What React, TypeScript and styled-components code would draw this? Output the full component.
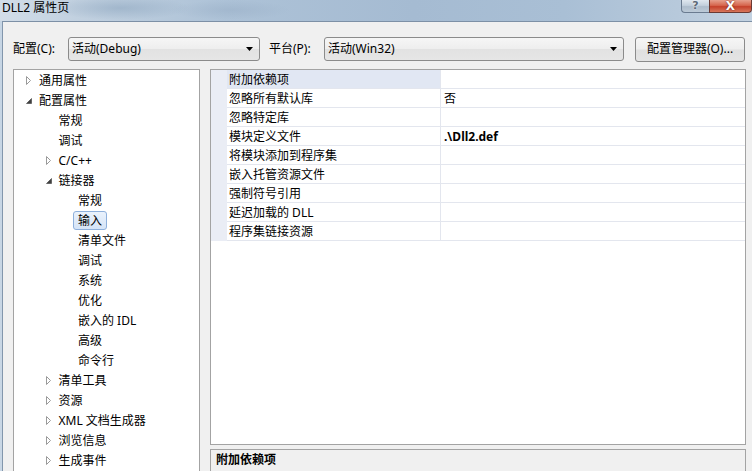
import React from "react";
import styled, { createGlobalStyle } from "styled-components";

const Global = createGlobalStyle`
  html, body { margin: 0; padding: 0; width: 752px; height: 471px; overflow: hidden; background: #f0f0f0; }
  body { font-family: "Noto Sans", "Noto Sans CJK SC", sans-serif; font-size: 12px; color: #000; }
  #root { width: 752px; height: 471px; }
  * { box-sizing: border-box; }
`;

const Window = styled.div`
  display: flex;
  flex-direction: column;
  width: 752px;
  height: 471px;
  overflow: hidden;
  background: linear-gradient(to bottom, #c6d5e4, #c9d7e5);
`;

const TitleBar = styled.div`
  flex: none;
  height: 21px;
  display: flex;
  align-items: flex-start;
  background:
    radial-gradient(ellipse 70px 12px at 120px 8px, rgba(140, 165, 190, 0.55), rgba(140, 165, 190, 0) 100%),
    radial-gradient(ellipse 60px 10px at 230px 10px, rgba(150, 172, 196, 0.45), rgba(150, 172, 196, 0) 100%),
    linear-gradient(to right, #d2dde8 0%, #c2d1e0 10%, #adc2d7 30%, #a5bbd2 55%, #a9bfd5 75%, #b7c9db 90%, #c3d2e1 100%);
`;

const Title = styled.span`
  padding: 0 0 0 2px;
  line-height: 15px;
  font-size: 12px;
  color: #000;
  white-space: nowrap;
`;

const CaptionButtons = styled.div`
  margin-left: auto;
  display: flex;
`;

const HelpButton = styled.div`
  width: 28px;
  height: 13px;
  border: 1px solid #6a7b90;
  border-top: none;
  border-right: none;
  border-radius: 0 0 0 4px;
  background: linear-gradient(to bottom, #dfe7ef 0%, #c3d0dd 45%, #aebdcc 55%, #bccad8 100%);
  display: flex;
  justify-content: center;
  align-items: flex-end;
  overflow: hidden;
  color: #5d6a78;
  font: bold 11px "DejaVu Sans", sans-serif;
  line-height: 12px;
  text-shadow: 0 0 2px #fff;
`;

const CloseButton = styled.div`
  width: 43px;
  height: 13px;
  border: 1px solid #6b3a33;
  border-top: none;
  border-radius: 0 0 4px 0;
  background: linear-gradient(to bottom, #e6a08d 0%, #d6664e 45%, #c5412b 55%, #d8775c 100%);
  display: flex;
  justify-content: center;
  align-items: flex-end;
  overflow: hidden;
  color: #fff;
  font: bold 12px "DejaVu Sans", sans-serif;
  line-height: 12px;
  text-shadow: 0 0 2px #5a1a10;
`;

const Client = styled.div`
  flex: 1;
  min-height: 0;
  overflow: hidden;
  margin-left: 2px;
  border-left: 1px solid #8296ac;
  border-top: 1px solid #7d90a6;
  background: #f0f0f0;
  padding: 15px 6px 0 10px;
  display: flex;
  flex-direction: column;
`;

const Toolbar = styled.div`
  flex: none;
  height: 24px;
  display: flex;
  align-items: center;
`;

const FieldLabel = styled.span<{ $gap?: number }>`
  flex: none;
  width: 55px;
  margin-left: ${(p) => p.$gap ?? 0}px;
  line-height: 24px;
  white-space: nowrap;
`;

const Combo = styled.div<{ $w: number }>`
  flex: none;
  width: ${(p) => p.$w}px;
  height: 24px;
  border: 1px solid #8b8b8b;
  border-radius: 3px;
  background: linear-gradient(to bottom, #f6f6f6 0%, #eeeeee 48%, #e2e2e2 52%, #e6e6e6 100%);
  display: flex;
  align-items: center;
  justify-content: space-between;
  padding: 0 6px 0 3px;
  white-space: nowrap;
  line-height: 20px;
`;

const Button = styled.div`
  flex: none;
  width: 110px;
  height: 25px;
  margin-left: 11px;
  border: 1px solid #8b8b8b;
  border-radius: 3px;
  background: linear-gradient(to bottom, #f6f6f6 0%, #eeeeee 48%, #e0e0e0 52%, #e4e4e4 100%);
  display: flex;
  align-items: center;
  justify-content: center;
  white-space: nowrap;
  line-height: 20px;
`;

const Main = styled.div`
  flex: none;
  height: 430px;
  margin-top: 8px;
  display: flex;
  gap: 10px;
`;

const TreePanel = styled.div`
  flex: none;
  width: 187px;
  border: 1px solid #a3a3a3;
  background: #fff;
  display: flex;
  flex-direction: column;
`;

const TreeRow = styled.div<{ $level: number }>`
  height: 20px;
  flex: none;
  display: flex;
  align-items: center;
  padding-left: ${(p) => p.$level * 19.5 + 4}px;
`;

const Expander = styled.span`
  flex: none;
  width: 16px;
  height: 20px;
  padding-left: 8px;
  display: flex;
  align-items: center;
`;

const TreeLabel = styled.span<{ $selected?: boolean }>`
  height: 19px;
  margin-top: 1px;
  line-height: 17px;
  padding: 0 4px;
  white-space: nowrap;
  border: 1px solid ${(p) => (p.$selected ? "#8eb0dc" : "transparent")};
  border-radius: 3px;
  background: ${(p) =>
    p.$selected ? "linear-gradient(to bottom, #eaf2fc, #d5e4f7)" : "transparent"};
`;

const RightPanel = styled.div`
  flex: none;
  width: 536px;
  display: flex;
  flex-direction: column;
`;

const Grid = styled.div`
  flex: none;
  height: 376px;
  border: 1px solid #a3a3a3;
  background: #fff;
  display: flex;
  flex-direction: column;
`;

const PropRow = styled.div`
  flex: none;
  height: 19px;
  display: grid;
  grid-template-columns: 16px 214px 1fr;
`;

const Strip = styled.div`
  background: #eaedf5;
`;

const NameCell = styled.div<{ $selected?: boolean }>`
  border-right: 1px solid #e3e6ee;
  border-bottom: 1px solid #e3e6ee;
  padding: 1px 0 0 2px;
  line-height: 17px;
  white-space: nowrap;
  background: ${(p) => (p.$selected ? "#e1e7f3" : "#fff")};
`;

const ValueCell = styled.div<{ $bold?: boolean }>`
  border-bottom: 1px solid #e3e6ee;
  padding: 1px 0 0 3px;
  line-height: 17px;
  white-space: nowrap;
  font-weight: ${(p) => (p.$bold ? 700 : 400)};
`;

const Splitter = styled.div`
  flex: none;
  height: 4px;
`;

const Description = styled.div`
  flex: none;
  height: 60px;
  border: 1px solid #a3a3a3;
  border-bottom: none;
  background: #f0f0f0;
  padding: 1px 0 0 5px;
`;

const DescTitle = styled.div`
  font-weight: 700;
  line-height: 18px;
`;

const Collapsed = () => (
  <svg width="6" height="9" viewBox="0 0 6 9">
    <path d="M0.5 0.5 L4.5 4.5 L0.5 8.5 Z" fill="#fff" stroke="#9a9a9a" strokeWidth="1" />
  </svg>
);

const Expanded = () => (
  <svg width="6" height="9" viewBox="0 0 6 9">
    <path d="M5.5 2.5 L5.5 7.5 L0.5 7.5 Z" fill="#404040" stroke="#404040" strokeWidth="0.6" />
  </svg>
);

const DropArrow = () => (
  <svg width="7" height="4" viewBox="0 0 7 4">
    <path d="M0 0 H7 L3.5 4 Z" fill="#000" />
  </svg>
);

type Node = { label: string; level: number; state?: "open" | "closed"; selected?: boolean };

const tree: Node[] = [
  { label: "通用属性", level: 0, state: "closed" },
  { label: "配置属性", level: 0, state: "open" },
  { label: "常规", level: 1 },
  { label: "调试", level: 1 },
  { label: "C/C++", level: 1, state: "closed" },
  { label: "链接器", level: 1, state: "open" },
  { label: "常规", level: 2 },
  { label: "输入", level: 2, selected: true },
  { label: "清单文件", level: 2 },
  { label: "调试", level: 2 },
  { label: "系统", level: 2 },
  { label: "优化", level: 2 },
  { label: "嵌入的 IDL", level: 2 },
  { label: "高级", level: 2 },
  { label: "命令行", level: 2 },
  { label: "清单工具", level: 1, state: "closed" },
  { label: "资源", level: 1, state: "closed" },
  { label: "XML 文档生成器", level: 1, state: "closed" },
  { label: "浏览信息", level: 1, state: "closed" },
  { label: "生成事件", level: 1, state: "closed" },
];

const props: { name: string; value?: string; bold?: boolean; selected?: boolean }[] = [
  { name: "附加依赖项", selected: true },
  { name: "忽略所有默认库", value: "否" },
  { name: "忽略特定库" },
  { name: "模块定义文件", value: ".\\Dll2.def", bold: true },
  { name: "将模块添加到程序集" },
  { name: "嵌入托管资源文件" },
  { name: "强制符号引用" },
  { name: "延迟加载的 DLL" },
  { name: "程序集链接资源" },
];

export default function App() {
  return (
    <>
      <Global />
      <Window>
        <TitleBar>
          <Title>DLL2 属性页</Title>
          <CaptionButtons>
            <HelpButton>?</HelpButton>
            <CloseButton>X</CloseButton>
          </CaptionButtons>
        </TitleBar>
        <Client>
          <Toolbar>
            <FieldLabel>配置(C):</FieldLabel>
            <Combo $w={192}>
              <span>活动(Debug)</span>
              <DropArrow />
            </Combo>
            <FieldLabel $gap={9}>平台(P):</FieldLabel>
            <Combo $w={300}>
              <span>活动(Win32)</span>
              <DropArrow />
            </Combo>
            <Button>配置管理器(O)...</Button>
          </Toolbar>
          <Main>
            <TreePanel>
              {tree.map((n, i) => (
                <TreeRow key={i} $level={n.level}>
                  <Expander>
                    {n.state === "closed" && <Collapsed />}
                    {n.state === "open" && <Expanded />}
                  </Expander>
                  <TreeLabel $selected={n.selected}>{n.label}</TreeLabel>
                </TreeRow>
              ))}
            </TreePanel>
            <RightPanel>
              <Grid>
                {props.map((p, i) => (
                  <PropRow key={i}>
                    <Strip />
                    <NameCell $selected={p.selected}>{p.name}</NameCell>
                    <ValueCell $bold={p.bold}>{p.value ?? ""}</ValueCell>
                  </PropRow>
                ))}
              </Grid>
              <Splitter />
              <Description>
                <DescTitle>附加依赖项</DescTitle>
              </Description>
            </RightPanel>
          </Main>
        </Client>
      </Window>
    </>
  );
}
